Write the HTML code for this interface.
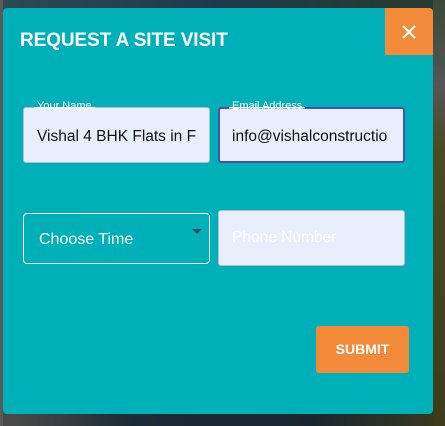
<!DOCTYPE html>
<html><head><style>
*{box-sizing:border-box;margin:0;padding:0}
body{width:445px;height:426px;overflow:hidden;position:relative;font-family:"Liberation Sans",sans-serif;
background:linear-gradient(90deg,#4a4a4a 0,#4a4a4a 3%,#1c2a35 30%,#1a2530 70%,#3a3a1e 100%);}
.top{position:absolute;left:0;top:0;width:445px;height:10px;background:linear-gradient(90deg,#2b4a55,#1c3a4a 50%,#2a3a30)}
.right{position:absolute;left:433px;top:0;width:12px;height:426px;background:linear-gradient(180deg,#3a4a3a,#555 20%,#4a4a22 35%,#3c3c1c)}
.left{position:absolute;left:0;top:0;width:3px;height:426px;background:#5a5a5a}
.modal{position:absolute;left:3px;top:8px;width:430px;height:406px;background:#00b0b9;border-radius:4px;overflow:hidden}
.close{position:absolute;right:0;top:0;width:48px;height:47px;background:#f28a3a}
h1{position:absolute;left:17px;top:22px;color:#fff;font-size:19px;font-weight:bold;letter-spacing:-0.1px}
.inp{position:absolute;background:#e8eefb;border:1px solid #b8bcc8;border-radius:3px;font-size:15.5px;color:#111;padding-left:13px;display:flex;align-items:center;white-space:nowrap;overflow:hidden}
.lbl{position:absolute;color:#fff;font-size:11px;background:linear-gradient(180deg,transparent 0,transparent 60%,#fff 60%,#fff 70%,transparent 70%)}
.sel{position:absolute;left:20px;top:205px;width:187px;height:51px;border:1px solid #fff;border-radius:4px;color:#fff;font-size:16px;padding:17px 0 0 15px}
.sub{position:absolute;left:313px;top:318px;width:93px;height:47px;background:#f28a3a;border-radius:3px;color:#fff;font-weight:bold;font-size:14px;text-align:center;line-height:47px}
</style></head><body>
<div class="top"></div><div class="left"></div><div class="right"></div>
<div class="modal">
<div class="close"><svg width="48" height="47"><path d="M18 18L30 30M30 18L18 30" stroke="#fff" stroke-width="2"/></svg></div>
<h1>REQUEST A SITE VISIT</h1>
<div class="inp" style="left:20px;top:99px;width:187px;height:56px;padding-top:4px">Vishal 4 BHK Flats in F</div>
<div class="lbl" style="left:31px;top:92px;padding:0 3px">Your Name</div>
<div class="inp" style="left:215px;top:99px;width:187px;height:56px;border:2px solid #4a50b0;padding-left:12px;padding-top:4px">info@vishalconstructio</div>
<div class="lbl" style="left:226px;top:92px;padding:0 3px">Email Address</div>
<div class="sel">Choose Time</div>
<svg style="position:absolute;left:189px;top:221px" width="10" height="6"><path d="M0 0L10 0L5 5Z" fill="#1a5560"/></svg>
<div class="inp" style="left:215px;top:202px;width:187px;height:56px;color:#fff">Phone Number</div>
<div class="sub">SUBMIT</div>
</div>
</body></html>
